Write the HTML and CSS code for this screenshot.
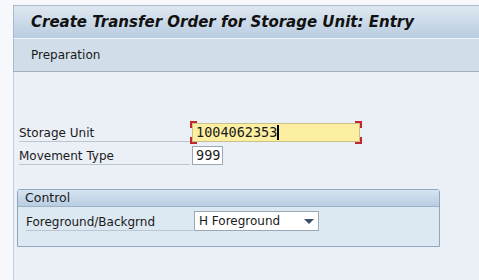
FILE: index.html
```html
<!DOCTYPE html>
<html lang="en">
<head>
    <meta charset="UTF-8">
    <title>Create Transfer Order for Storage Unit: Entry</title>
    <link rel="stylesheet" href="styles.css">
</head>
<body>
    <div class="window">
        <div class="title-bar">
            <h1>Create Transfer Order for Storage Unit: Entry</h1>
        </div>
        <div class="toolbar">
            <span class="tool">Preparation</span>
        </div>
        <main class="content">
            <div class="fields">
                <div class="row">
                    <label class="label">Storage Unit</label>
                    <div class="input required">
                        <span class="value">1004062353</span><span class="caret"></span>
                        <span class="corner tl"></span><span class="corner tr"></span>
                        <span class="corner bl"></span><span class="corner br"></span>
                    </div>
                </div>
                <div class="row">
                    <label class="label">Movement Type</label>
                    <div class="input short"><span class="value">999</span></div>
                </div>
            </div>

            <section class="group">
                <div class="group-title">Control</div>
                <div class="group-body">
                    <div class="row">
                        <label class="label">Foreground/Backgrnd</label>
                        <div class="select">
                            <span>H Foreground</span>
                            <span class="arrow"></span>
                        </div>
                    </div>
                </div>
            </section>
        </main>
    </div>
</body>
</html>
```

FILE: styles.css
```css
/* General */
body {
    margin: 0;
    padding: 0;
    background: #f6f8fb;
    font-family: Tahoma, "DejaVu Sans", sans-serif;
    font-size: 12px;
    color: #1a1a1a;
}

.window {
    margin-left: 13px;
    padding-top: 5px;
    height: 275px;
    display: flex;
    flex-direction: column;
}

.title-bar {
    height: 32px;
    border-top: 1px solid #a8b9cb;
    border-left: 1px solid #a8b9cb;
    background: linear-gradient(to bottom, #dfe8f1, #b8cce1);
    display: flex;
    align-items: center;
    padding-left: 17px;
}

.title-bar h1 {
    margin: 0;
    font-family: "DejaVu Sans", Verdana, sans-serif;
    font-size: 15px;
    font-weight: bold;
    font-style: italic;
    color: #111;
}

.toolbar {
    height: 32px;
    border-top: 1px solid #eef3f8;
    border-bottom: 1px solid #9fb0c2;
    border-left: 1px solid #a8b9cb;
    background: #d1dde9;
    display: flex;
    align-items: center;
    padding-left: 17px;
}

.content {
    flex: 1;
    border-left: 1px solid #c5d0dc;
    background: #ebf0f7;
    padding: 50px 0 0 5px;
}

.fields {
    display: flex;
    flex-direction: column;
    gap: 3px;
}

.row {
    display: flex;
    align-items: flex-end;
}

.label {
    width: 171px;
    height: 16px;
    line-height: 16px;
    padding-top: 3px;
    border-bottom: 1px solid #bcc6d1;
}

.input {
    height: 17px;
    margin-left: 2px;
    border: 1px solid #9aa7b4;
    background: #fff;
    font-family: "DejaVu Sans Mono", monospace;
    font-size: 13.5px;
    line-height: 17px;
    padding-left: 3px;
    position: relative;
    display: flex;
    align-items: center;
}

.required {
    width: 163px;
    background: #fdefa2;
    border-color: #c9c08a;
}

.short {
    width: 26px;
}

.caret {
    width: 2px;
    height: 15px;
    background: #000;
}

.corner {
    position: absolute;
    width: 5px;
    height: 5px;
    border: 0 solid #c0282c;
}

.corner.tl { left: -3px; top: -3px; border-top-width: 2px; border-left-width: 2px; }
.corner.tr { right: -3px; top: -3px; border-top-width: 2px; border-right-width: 2px; }
.corner.bl { left: -3px; bottom: -3px; border-bottom-width: 2px; border-left-width: 2px; }
.corner.br { right: -3px; bottom: -3px; border-bottom-width: 2px; border-right-width: 2px; }

/* Group box */
.group {
    margin-top: 24px;
    width: 421px;
    margin-left: -2px;
    border: 1px solid #8fa6bf;
    border-radius: 3px 3px 0 0;
    background: #dce8f2;
}

.group-title {
    height: 16px;
    line-height: 16px;
    padding-left: 7px;
    font-size: 12.5px;
    background: linear-gradient(to bottom, #d7e4f0, #b9cde2);
    border-bottom: 1px solid #9fb3c8;
}

.group-body {
    padding: 4px 0 15px 8px;
}

.group .label {
    width: 167px;
}

.select {
    width: 119px;
    height: 18px;
    margin-left: 1px;
    border: 1px solid #9aa7b4;
    background: #fff;
    padding-left: 4px;
    display: flex;
    align-items: center;
    justify-content: space-between;
}

.arrow {
    margin-right: 4px;
    width: 0;
    height: 0;
    border-left: 5px solid transparent;
    border-right: 5px solid transparent;
    border-top: 5px solid #3a4e66;
}
```
